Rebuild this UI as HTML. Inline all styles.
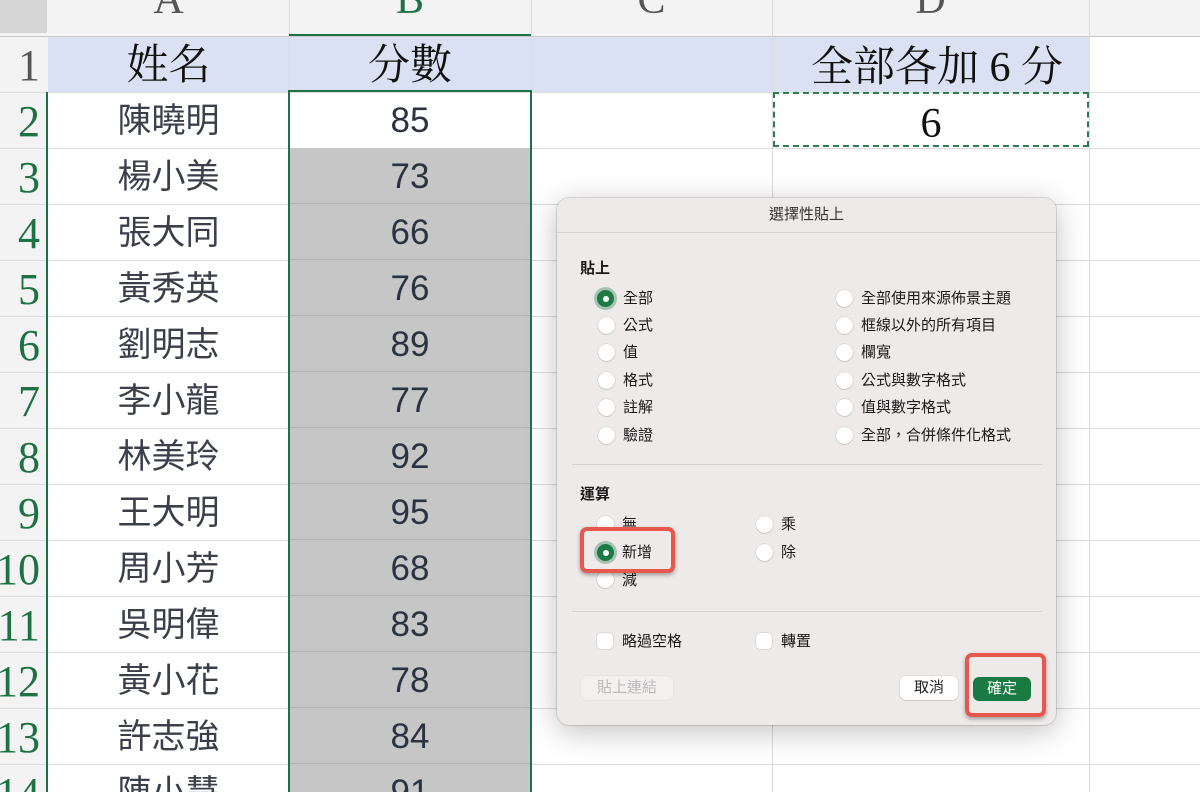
<!DOCTYPE html>
<html style="width:1200px;height:792px;overflow:hidden"><head><meta charset="utf-8"><style>
*{margin:0;padding:0;box-sizing:border-box}
body{width:1200px;height:792px;overflow:hidden;background:#fff;position:relative;font-family:"Liberation Sans","Noto Sans CJK TC",sans-serif}
.a{position:absolute}
.hl{position:absolute;left:0;width:1200px;height:1px;background:#dcdcdc}
.vl{position:absolute;top:0;width:1px;height:792px;background:#dcdcdc}
.rn{position:absolute;left:0;width:46px;text-align:right;padding-right:6px;font-family:"Liberation Serif",serif;font-size:44px;color:#1e7145;line-height:60px;height:56px;overflow:hidden;white-space:nowrap;direction:rtl}
.nm{position:absolute;left:48px;width:241px;text-align:center;font-size:34px;color:#3a3f4a;line-height:58px}
.sc{position:absolute;left:290px;width:240px;text-align:center;font-size:35px;color:#2b3240;line-height:58px}
.ch{position:absolute;top:-24px;font-family:"Liberation Serif",serif;font-size:42px;color:#555;text-align:center}
.dlg{position:absolute;left:557px;top:198px;width:499px;height:527px;background:#efeaea;border-radius:12px;box-shadow:0 6px 30px rgba(0,0,0,.25),0 0 0 1px rgba(0,0,0,.12);font-size:15px;color:#222}
.r{position:absolute;width:17px;height:17px;border-radius:50%;background:#fff;box-shadow:0 0 1px rgba(0,0,0,.4),0 1px 1px rgba(0,0,0,.1)}
.r.on{background:#1d7a46;box-shadow:0 0 0 3px rgba(29,122,70,.35)}
.r.on::after{content:"";position:absolute;left:5.5px;top:5.5px;width:6px;height:6px;border-radius:50%;background:#fff}
.t{position:absolute;font-size:15px;color:#1a1a1a;line-height:17px}
.cb{position:absolute;width:16px;height:16px;border-radius:4px;background:#fff;box-shadow:0 0 1px rgba(0,0,0,.45)}
.red{position:absolute;border:4px solid #e8574e;border-radius:7px;box-shadow:0 2px 4px rgba(0,0,0,.35)}
</style></head><body>
<div class="a" style="left:0;top:0;width:1200px;height:36px;background:#f3f3f3"></div>
<div class="a" style="left:0;top:0;width:47px;height:33px;background:#d6d6d6"></div>
<div class="a" style="left:0;top:36px;width:48px;height:756px;background:#f3f3f3"></div>
<div class="a" style="left:48px;top:36px;width:1041px;height:56px;background:#d9e1f2"></div>
<div class="hl" style="top:36px;background:#c8c8c8"></div>
<div class="hl" style="top:92px"></div><div class="hl" style="top:148px"></div><div class="hl" style="top:204px"></div><div class="hl" style="top:260px"></div><div class="hl" style="top:316px"></div><div class="hl" style="top:372px"></div><div class="hl" style="top:428px"></div><div class="hl" style="top:484px"></div><div class="hl" style="top:540px"></div><div class="hl" style="top:596px"></div><div class="hl" style="top:652px"></div><div class="hl" style="top:708px"></div><div class="hl" style="top:764px"></div>
<div class="vl" style="left:289px"></div><div class="vl" style="left:531px"></div><div class="vl" style="left:772px"></div><div class="vl" style="left:1089px"></div>
<div class="a" style="left:290px;top:148px;width:240px;height:644px;background:repeating-linear-gradient(#c6c6c6 0,#c6c6c6 55px,#b4b4b4 55px,#b4b4b4 56px)"></div>
<div class="ch" style="left:48px;width:241px">A</div>
<div class="ch" style="left:289px;width:242px;color:#1e7145">B</div>
<div class="ch" style="left:531px;width:241px">C</div>
<div class="ch" style="left:772px;width:317px">D</div>
<div class="a" style="left:289px;top:34px;width:242px;height:2px;background:#1e7145"></div>
<div class="a" style="left:46px;top:92px;width:2px;height:700px;background:#1e7145"></div>
<div class="rn" style="top:36px;color:#555">1</div>
<div class="rn" style="top:92px">2</div><div class="rn" style="top:148px">3</div><div class="rn" style="top:204px">4</div><div class="rn" style="top:260px">5</div><div class="rn" style="top:316px">6</div><div class="rn" style="top:372px">7</div><div class="rn" style="top:428px">8</div><div class="rn" style="top:484px">9</div><div class="rn" style="top:540px">10</div><div class="rn" style="top:596px">11</div><div class="rn" style="top:652px">12</div><div class="rn" style="top:708px">13</div><div class="rn" style="top:764px">14</div>
<div class="a" style="left:48px;top:36px;width:241px;text-align:center;font-family:'Liberation Serif','Noto Serif CJK SC',serif;font-size:42px;line-height:60px;color:#111">姓名</div>
<div class="a" style="left:289px;top:36px;width:242px;text-align:center;font-family:'Liberation Serif','Noto Serif CJK SC',serif;font-size:42px;line-height:60px;color:#111">分數</div>
<div class="a" style="left:772px;top:36px;width:317px;text-align:right;padding-right:26px;font-family:'Liberation Serif','Noto Serif CJK SC',serif;font-size:42px;line-height:64px;color:#111;white-space:nowrap">全部各加 6 分</div>
<div class="a" style="left:773px;top:92px;width:316px;height:55px;border:2px dashed #2e7d4f;text-align:center;font-family:'Liberation Serif',serif;font-size:42px;line-height:60px;color:#111">6</div>
<div class="nm" style="top:92px">陳曉明</div><div class="nm" style="top:148px">楊小美</div><div class="nm" style="top:204px">張大同</div><div class="nm" style="top:260px">黃秀英</div><div class="nm" style="top:316px">劉明志</div><div class="nm" style="top:372px">李小龍</div><div class="nm" style="top:428px">林美玲</div><div class="nm" style="top:484px">王大明</div><div class="nm" style="top:540px">周小芳</div><div class="nm" style="top:596px">吳明偉</div><div class="nm" style="top:652px">黃小花</div><div class="nm" style="top:708px">許志強</div><div class="nm" style="top:764px">陳小慧</div>
<div class="sc" style="top:92px">85</div><div class="sc" style="top:148px">73</div><div class="sc" style="top:204px">66</div><div class="sc" style="top:260px">76</div><div class="sc" style="top:316px">89</div><div class="sc" style="top:372px">77</div><div class="sc" style="top:428px">92</div><div class="sc" style="top:484px">95</div><div class="sc" style="top:540px">68</div><div class="sc" style="top:596px">83</div><div class="sc" style="top:652px">78</div><div class="sc" style="top:708px">84</div><div class="sc" style="top:764px">91</div>
<div class="a" style="left:288px;top:90px;width:244px;height:702px;border:2px solid #1e7145;border-bottom:none"></div>
<div class="dlg">
<div class="a" style="left:0;top:0;width:499px;height:35px;text-align:center;line-height:34px;font-size:15px;color:#333;border-bottom:1px solid #d8d3d3">選擇性貼上</div>
<div class="t" style="left:23px;top:62px;font-weight:bold">貼上</div>
<div class="r on" style="left:40px;top:92px"></div><div class="t" style="left:66px;top:92px">全部</div>
<div class="r" style="left:41px;top:119px"></div><div class="t" style="left:66px;top:119px">公式</div>
<div class="r" style="left:41px;top:146px"></div><div class="t" style="left:66px;top:146px">值</div>
<div class="r" style="left:41px;top:174px"></div><div class="t" style="left:66px;top:174px">格式</div>
<div class="r" style="left:41px;top:201px"></div><div class="t" style="left:66px;top:201px">註解</div>
<div class="r" style="left:41px;top:229px"></div><div class="t" style="left:66px;top:229px">驗證</div>
<div class="r" style="left:279px;top:92px"></div><div class="t" style="left:304px;top:92px">全部使用來源佈景主題</div>
<div class="r" style="left:279px;top:119px"></div><div class="t" style="left:304px;top:119px">框線以外的所有項目</div>
<div class="r" style="left:279px;top:146px"></div><div class="t" style="left:304px;top:146px">欄寬</div>
<div class="r" style="left:279px;top:174px"></div><div class="t" style="left:304px;top:174px">公式與數字格式</div>
<div class="r" style="left:279px;top:201px"></div><div class="t" style="left:304px;top:201px">值與數字格式</div>
<div class="r" style="left:279px;top:229px"></div><div class="t" style="left:304px;top:229px">全部，合併條件化格式</div>
<div class="a" style="left:15px;top:266px;width:470px;height:1px;background:#d6d1d1"></div>
<div class="t" style="left:23px;top:288px;font-weight:bold">運算</div>
<div class="r" style="left:40px;top:318px"></div><div class="t" style="left:65px;top:318px">無</div>
<div class="r" style="left:40px;top:373px"></div><div class="t" style="left:65px;top:374px">減</div>
<div class="r" style="left:199px;top:318px"></div><div class="t" style="left:224px;top:318px">乘</div>
<div class="r" style="left:199px;top:346px"></div><div class="t" style="left:224px;top:346px">除</div>
<div class="red" style="left:23px;top:329px;width:95px;height:46px;background:#efeaea"></div>
<div class="r on" style="left:40px;top:346px"></div><div class="t" style="left:65px;top:346px">新增</div>
<div class="a" style="left:15px;top:413px;width:470px;height:1px;background:#d6d1d1"></div>
<div class="cb" style="left:40px;top:435px"></div><div class="t" style="left:65px;top:435px">略過空格</div>
<div class="cb" style="left:199px;top:435px"></div><div class="t" style="left:224px;top:435px">轉置</div>
<div class="a" style="left:24px;top:478px;width:92px;height:24px;border-radius:6px;background:#f3f0f0;box-shadow:0 0 1px rgba(0,0,0,.15);color:#bbb;text-align:center;line-height:24px">貼上連結</div>
<div class="a" style="left:343px;top:478px;width:58px;height:24px;border-radius:6px;background:#fff;box-shadow:0 0 1px rgba(0,0,0,.35),0 1px 1px rgba(0,0,0,.1);text-align:center;line-height:24px;color:#222">取消</div>
<div class="red" style="left:408px;top:455px;width:81px;height:64px"></div>
<div class="a" style="left:416px;top:479px;width:58px;height:24px;border-radius:6px;background:#1a7a43;text-align:center;line-height:24px;color:#fff">確定</div>
</div>
</body></html>
